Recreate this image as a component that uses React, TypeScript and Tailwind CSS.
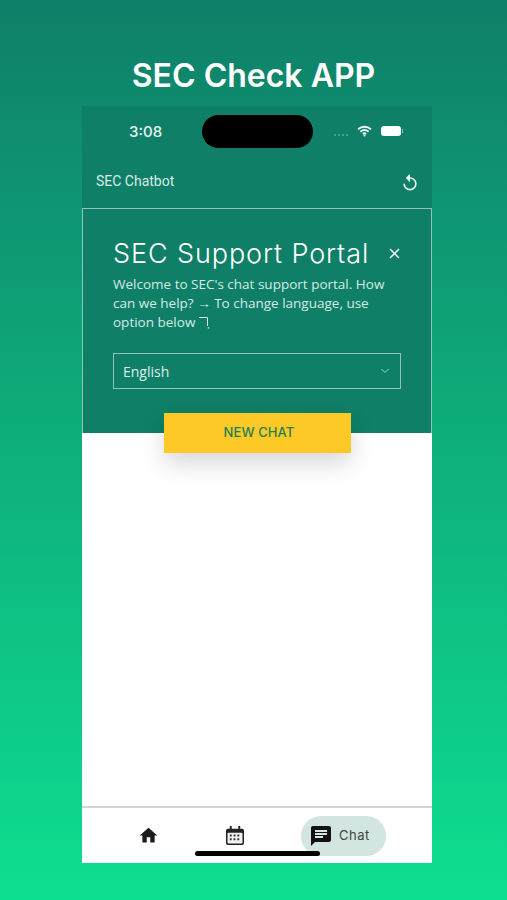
import React from 'react';

const StatusBar: React.FC = () => (
  <div className="h-[54px] relative flex items-center">
    <span className="absolute left-[47px] top-[16px] text-[15px] leading-5 font-medium text-[#e6f3ef] font-['Inter',sans-serif]">3:08</span>
    <div className="absolute left-[120px] top-[9px] w-[111px] h-[33px] rounded-full bg-black" />
    <div className="absolute left-[252px] top-[28px] flex gap-[2px]">
      <span className="w-[2px] h-[2px] rounded-full bg-[#5fa895]" />
      <span className="w-[2px] h-[2px] rounded-full bg-[#5fa895]" />
      <span className="w-[2px] h-[2px] rounded-full bg-[#5fa895]" />
      <span className="w-[2px] h-[2px] rounded-full bg-[#5fa895]" />
    </div>
    <svg className="absolute left-[275px] top-[19px]" width="15" height="12" viewBox="0 0 15 12" fill="none" stroke="#eef8f5" strokeWidth="1.8">
      <path d="M1 4.2C4.8.9 10.2.9 14 4.2" />
      <path d="M3.4 6.7c2.5-2.1 5.7-2.1 8.2 0" />
      <path d="M5.8 9c1.1-.9 2.3-.9 3.4 0" />
      <circle cx="7.5" cy="10.5" r="1" fill="#eef8f5" stroke="none" />
    </svg>
    <div className="absolute left-[299px] top-[20px] w-[20px] h-[10px] rounded-[3px] bg-white" />
    <div className="absolute left-[320px] top-[23px] w-[1px] h-[4px] bg-[#8cc4b5]" />
  </div>
);

const Toolbar: React.FC = () => (
  <div className="h-[48px] flex items-start justify-between pl-[14px] pr-[12px] pt-[11px]">
    <span className="text-[14px] leading-5 text-[#d8ece6] font-['Roboto',sans-serif]">SEC Chatbot</span>
    <svg className="mt-[2px]" width="20" height="20" viewBox="0 0 24 24" fill="#e8f4f0">
      <path d="M12 5V1L7 6l5 5V7c3.31 0 6 2.69 6 6s-2.69 6-6 6-6-2.69-6-6H4c0 4.42 3.58 8 8 8s8-3.58 8-8-3.58-8-8-8z" />
    </svg>
  </div>
);

const Panel: React.FC = () => (
  <div className="h-[225px] border border-b-0 border-[#8fc5b6] pl-[30px] pr-[30px] pt-[28px]">
    <div className="flex items-center justify-between">
      <h2 className="text-[27px] leading-[34px] font-light tracking-[0.9px] whitespace-nowrap text-white font-['Inter',sans-serif]">SEC Support Portal</h2>
      <svg className="mr-[1px] mb-[2px]" width="11" height="11" viewBox="0 0 11 11" stroke="#f4faf8" strokeWidth="1.5">
        <path d="M1 1l9 9M10 1l-9 9" />
      </svg>
    </div>
    <p className="mt-[4px] text-[13.5px] leading-[19px] text-[#d5ebe4] font-['Open_Sans',sans-serif]">
      Welcome to SEC's chat support portal. How can we help? → To change language, use option below{' '}
      <svg className="inline-block align-[-2px]" width="11" height="13" viewBox="0 0 11 13" fill="none" stroke="#d5ebe4" strokeWidth="1">
        <path d="M0 1.5h8.5V10" />
        <path d="M9.5 11.2v1.3" strokeWidth="1.5" />
      </svg>
    </p>
    <div className="mt-[21px] h-[36px] border border-[#8fc5b6] flex items-center justify-between pl-[9px] pr-[11px]">
      <span className="text-[14px] text-[#dcefe9] font-['Open_Sans',sans-serif]">English</span>
      <svg width="8" height="6" viewBox="0 0 8 6" fill="none" stroke="#a5d2c6" strokeWidth="1">
        <path d="M.5 1l3.5 3.5L7.5 1" />
      </svg>
    </div>
  </div>
);

const BottomNav: React.FC = () => (
  <div className="h-[57px] bg-white border-t-2 border-[#d4d6d6] relative flex items-start pt-[8px]">
    <div className="w-[132px] flex justify-start pt-[9px] pl-[56px]">
      <svg width="21" height="21" viewBox="0 0 24 24" fill="#1c1c1c">
        <path d="M10 20v-6h4v6h5v-8h3L12 3 2 12h3v8z" />
      </svg>
    </div>
    <div className="ml-[10px] w-[90px] flex justify-start pt-[10px] pl-[2px]">
      <svg width="18" height="19" viewBox="0 0 19 20">
        <path d="M4 0h2v3h7V0h2v3h2a2 2 0 0 1 2 2v13a2 2 0 0 1-2 2H2a2 2 0 0 1-2-2V5a2 2 0 0 1 2-2h2z" fill="#222" />
        <rect x="1.6" y="7" width="15.8" height="11.4" rx="1" fill="#f2f2f2" />
        <path d="M4 9h2v2H4zM8 9h2v2H8zM12 9h2v2h-2zM4 13h2v2H4zM8 13h2v2H8zM12 13h2v2h-2z" fill="#333" />
      </svg>
    </div>
    <div className="ml-[-13px] w-[85px] h-[40px] rounded-full bg-[#d3e5e0] flex items-center pl-[10px] gap-[8px]">
      <svg width="20" height="20" viewBox="2 2 20 20" fill="#111">
        <path d="M20 2H4c-1.1 0-1.99.9-1.99 2L2 22l4-4h14c1.1 0 2-.9 2-2V4c0-1.1-.9-2-2-2zM6 9h12v2H6V9zm8 5H6v-2h8v2zm4-6H6V6h12v2z" />
      </svg>
      <span className="text-[13px] font-normal tracking-[0.5px] text-[#3c4644] font-['Inter',sans-serif]">Chat</span>
    </div>
    <div className="absolute left-[113px] top-[43px] w-[125px] h-[5px] rounded-full bg-black" />
  </div>
);

const App: React.FC = () => {
  return (
    <div className="w-[507px] h-[900px] overflow-hidden flex flex-col items-center bg-[linear-gradient(180deg,#0f7f68_0%,#0ddf90_100%)]">
      <h1 className="h-[106px] pt-[54px] text-[32px] leading-[44px] font-semibold whitespace-nowrap text-white font-['Inter',sans-serif]">SEC Check APP</h1>
      <div className="ml-[7px] w-[350px] h-[757px] flex flex-col bg-[#0f7f68] relative">
        <StatusBar />
        <Toolbar />
        <Panel />
        <div className="flex-1 bg-white" />
        <BottomNav />
        <button className="absolute left-[82px] top-[307px] w-[187px] h-[40px] pl-[3px] bg-[#fdc926] text-[#1e7f52] text-[13px] font-medium tracking-[0.1px] font-['Inter',sans-serif] shadow-[0_10px_24px_rgba(0,0,0,0.16)]">
          NEW CHAT
        </button>
      </div>
    </div>
  );
};

export default App;
